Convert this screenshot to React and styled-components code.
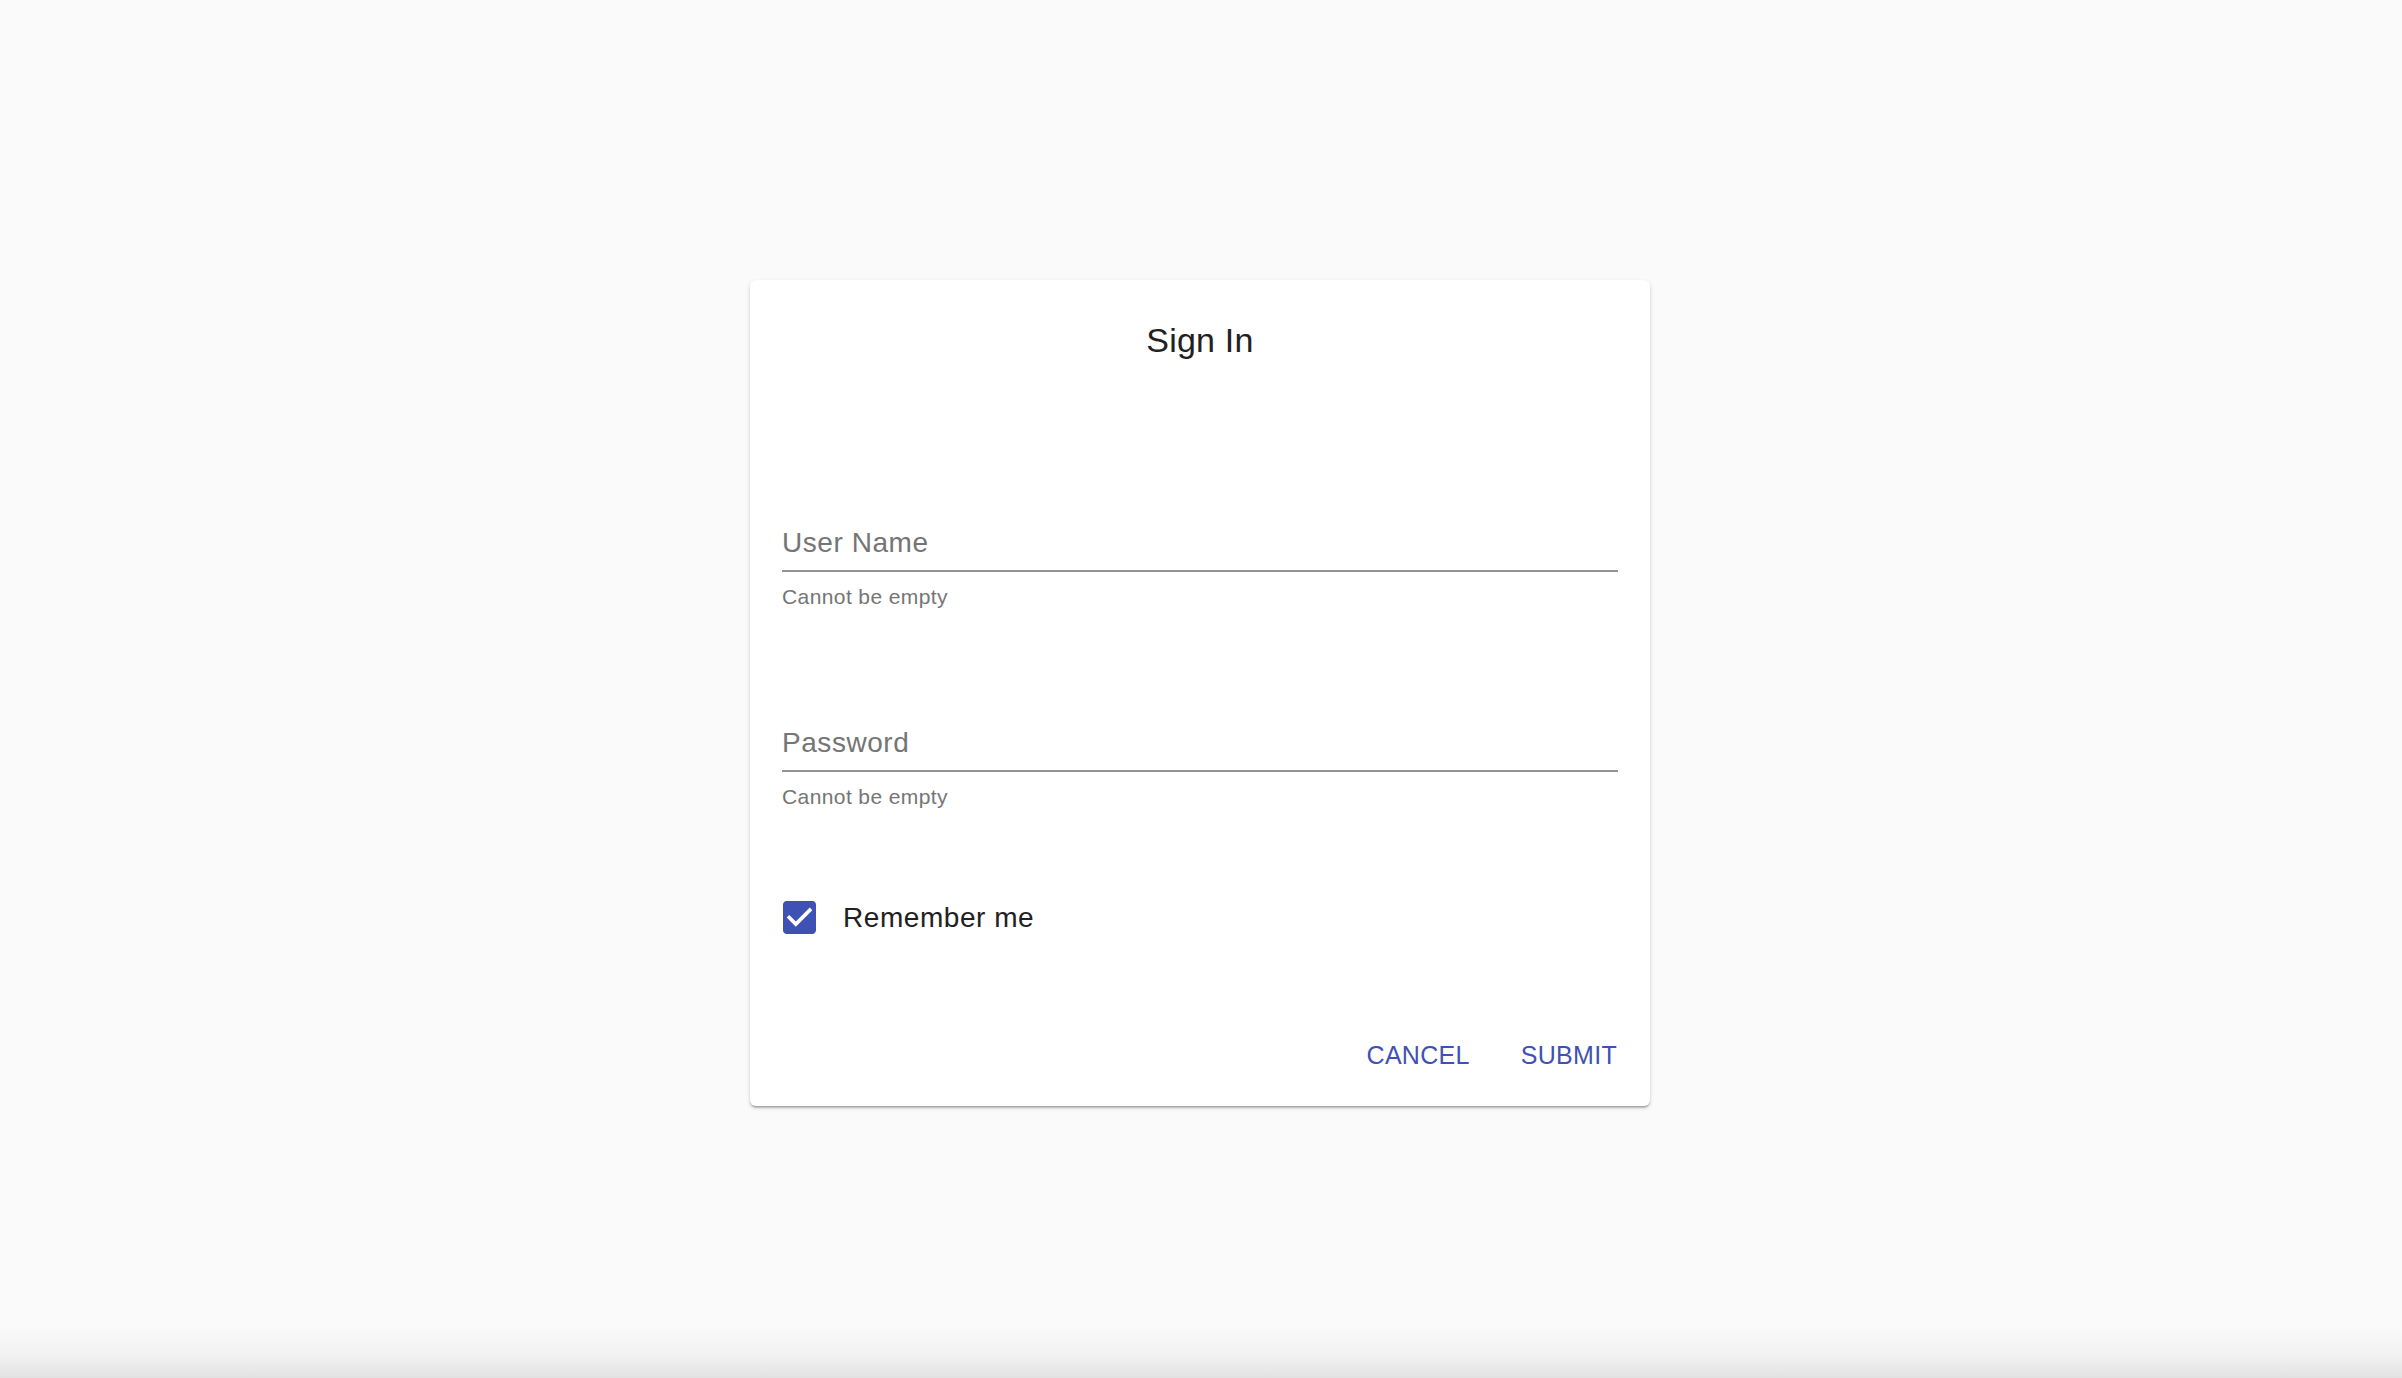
import React from "react";
import styled, { createGlobalStyle } from "styled-components";

const GlobalStyle = createGlobalStyle`
  html, body {
    margin: 0;
    padding: 0;
  }
  body {
    font-family: "Liberation Sans", Arial, sans-serif;
    background: #fafafa;
    -webkit-font-smoothing: antialiased;
  }
`;

const Page = styled.div`
  min-height: 100vh;
  box-sizing: border-box;
  padding: 280px 2px 0 0;
  display: flex;
  flex-direction: column;
  align-items: center;
  background: linear-gradient(
    to bottom,
    #fafafa 0,
    #fafafa calc(100% - 52px),
    #f2f2f2 calc(100% - 24px),
    #e2e2e2 100%
  );
`;

const Card = styled.form`
  width: 900px;
  height: 826px;
  box-sizing: border-box;
  background: #ffffff;
  border-radius: 6px;
  padding: 40px 32px 36px;
  display: flex;
  flex-direction: column;
  box-shadow: 0 3px 2px -2px rgba(0, 0, 0, 0.2), 0 2px 2px 0 rgba(0, 0, 0, 0.14),
    0 2px 5px 0 rgba(0, 0, 0, 0.12);
`;

const Title = styled.h1`
  margin: 0;
  font-size: 34px;
  line-height: 40px;
  font-weight: 400;
  letter-spacing: 0.2px;
  color: #212121;
  text-align: center;
`;

const Field = styled.div`
  display: flex;
  flex-direction: column;
  margin-top: ${(p) => p.$gap}px;
`;

const InputLine = styled.div`
  font-size: 28px;
  line-height: 32px;
  letter-spacing: 0.55px;
  color: #757575;
  padding-bottom: 11px;
  border-bottom: 2px solid #949494;
`;

const Helper = styled.div`
  margin-top: 13px;
  font-size: 21px;
  line-height: 24px;
  letter-spacing: 0.4px;
  color: #757575;
`;

const CheckRow = styled.label`
  margin-top: 92px;
  display: flex;
  align-items: center;
  gap: 27px;
  height: 33px;
  padding-left: 1px;
`;

const CheckLabel = styled.span`
  font-size: 28px;
  line-height: 32px;
  letter-spacing: 0.55px;
  color: #212121;
`;

const Actions = styled.div`
  margin-top: auto;
  display: flex;
  justify-content: flex-end;
  gap: 49px;
`;

const TextButton = styled.button`
  border: none;
  background: transparent;
  padding: 0 1px;
  margin: 0;
  font-family: "Liberation Sans", Arial, sans-serif;
  font-size: 25px;
  line-height: 30px;
  letter-spacing: 0.3px;
  color: #3f51b5;
  text-transform: uppercase;
  cursor: pointer;
`;

const CheckIcon = () => (
  <svg width="33" height="33" viewBox="3 3 18 18" aria-hidden="true">
    <path
      fill="#3f51b5"
      d="M19 3H5c-1.11 0-2 .9-2 2v14c0 1.1.89 2 2 2h14c1.11 0 2-.9 2-2V5c0-1.1-.89-2-2-2zm-9 14l-5-5 1.41-1.41L10 14.17l7.59-7.59L19 8l-9 9z"
    />
  </svg>
);

export default function App() {
  return (
    <>
      <GlobalStyle />
      <Page>
        <Card onSubmit={(e) => e.preventDefault()}>
          <Title>Sign In</Title>
          <Field $gap={167}>
            <InputLine>User Name</InputLine>
            <Helper>Cannot be empty</Helper>
          </Field>
          <Field $gap={118}>
            <InputLine>Password</InputLine>
            <Helper>Cannot be empty</Helper>
          </Field>
          <CheckRow>
            <CheckIcon />
            <CheckLabel>Remember me</CheckLabel>
          </CheckRow>
          <Actions>
            <TextButton type="button">Cancel</TextButton>
            <TextButton type="submit">Submit</TextButton>
          </Actions>
        </Card>
      </Page>
    </>
  );
}
